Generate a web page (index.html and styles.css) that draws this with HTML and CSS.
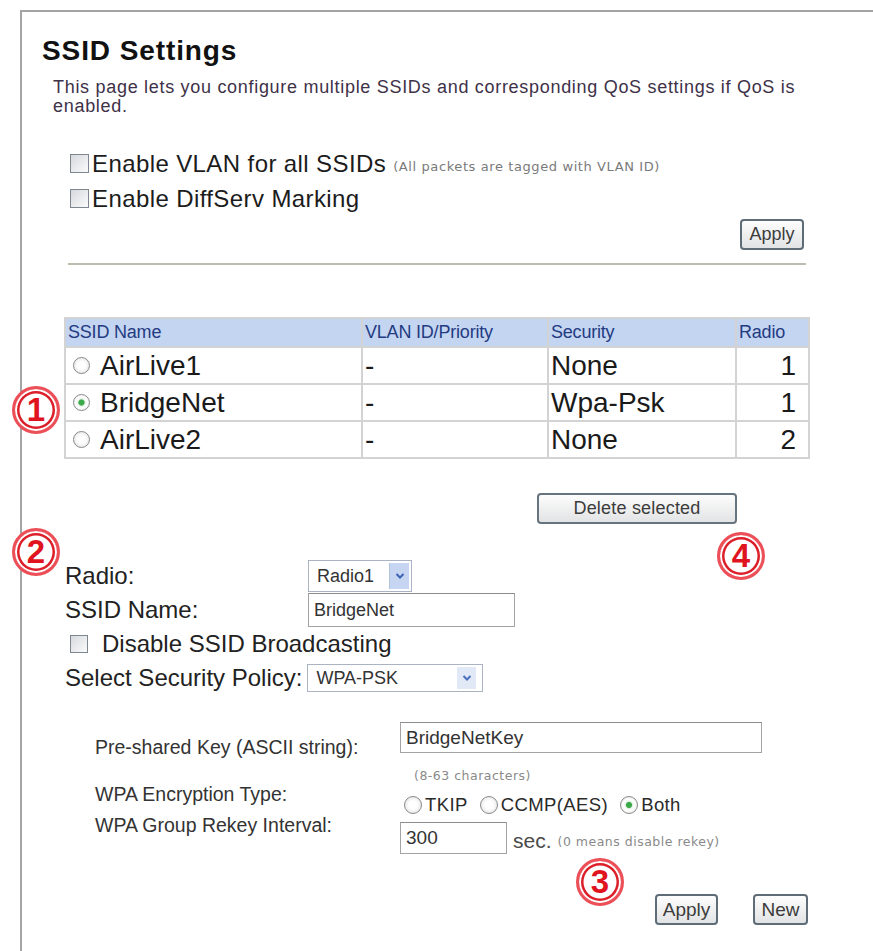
FILE: index.html
```html
<!DOCTYPE html>
<html>
<head>
<meta charset="utf-8">
<title>SSID Settings</title>
<link rel="stylesheet" href="styles.css">
</head>
<body>
<div class="page">
  <div class="frame">
    <h1 class="title">SSID Settings</h1>
    <p class="desc">This page lets you configure multiple SSIDs and corresponding QoS settings if QoS is enabled.</p>

    <div class="opts">
      <div class="opt"><span class="cb"></span><span>Enable VLAN for all SSIDs</span><span class="note">(All packets are tagged with VLAN ID)</span></div>
      <div class="opt"><span class="cb"></span><span>Enable DiffServ Marking</span></div>
    </div>

    <div class="apply-row"><button class="btn apply">Apply</button></div>
    <div class="rule"></div>

    <table class="ssids">
      <colgroup><col class="w1"><col class="w2"><col class="w3"><col class="w4"></colgroup>
      <thead>
        <tr><th>SSID Name</th><th>VLAN ID/Priority</th><th>Security</th><th>Radio</th></tr>
      </thead>
      <tbody>
        <tr><td><span class="rd"></span>AirLive1</td><td>-</td><td>None</td><td class="num">1</td></tr>
        <tr><td class="mark"><span class="badge b1">1</span><span class="rd on"></span>BridgeNet</td><td>-</td><td>Wpa-Psk</td><td class="num">1</td></tr>
        <tr><td><span class="rd"></span>AirLive2</td><td>-</td><td>None</td><td class="num">2</td></tr>
      </tbody>
    </table>

    <div class="del-row">
      <button class="btn del">Delete selected</button>
      <span class="badge b4">4</span>
    </div>

    <div class="edit">
      <span class="badge b2">2</span>
      <div class="erow"><span class="elabel">Radio:</span><span class="sel s-radio"><span class="sv">Radio1</span><span class="arr"><svg width="10" height="8" viewBox="0 0 10 8"><path d="M1.5 2 L5 5.5 L8.5 2" fill="none" stroke="#3d63b5" stroke-width="2"/></svg></span></span></div>
      <div class="erow"><span class="elabel">SSID Name:</span><span class="inp i-ssid">BridgeNet</span></div>
      <div class="erow chk"><span class="cb"></span><span>Disable SSID Broadcasting</span></div>
      <div class="erow"><span class="plabel">Select Security Policy:</span><span class="sel s-pol"><span class="sv">WPA-PSK</span><span class="arr light"><svg width="10" height="8" viewBox="0 0 10 8"><path d="M1.5 2 L5 5.5 L8.5 2" fill="none" stroke="#4a6fbd" stroke-width="2"/></svg></span></span></div>
    </div>

    <div class="wpa">
      <div class="wcol-l">
        <span class="wl l-key">Pre-shared Key (ASCII string):</span>
        <span class="wl l-enc">WPA Encryption Type:</span>
        <span class="wl l-rk">WPA Group Rekey Interval:</span>
      </div>
      <div class="wcol-r">
        <span class="inp i-key">BridgeNetKey</span>
        <span class="hint h-chars">(8-63 characters)</span>
        <span class="radios">
          <span class="ropt"><span class="rd big"></span>TKIP</span>
          <span class="ropt"><span class="rd big"></span>CCMP(AES)</span>
          <span class="ropt"><span class="rd big on"></span>Both</span>
        </span>
        <span class="rekey"><span class="inp i-rk">300</span><span class="sec">sec.</span><span class="hint h-rk">(0 means disable rekey)</span></span>
      </div>
    </div>

    <div class="btns">
      <span class="badge b3">3</span>
      <button class="btn apply2">Apply</button>
      <button class="btn new">New</button>
    </div>
  </div>
</div>
</body>
</html>
```

FILE: styles.css
```css
html, body {
  margin: 0;
  padding: 0;
  background: #ffffff;
}
body {
  font-family: "Liberation Sans", Arial, sans-serif;
  color: #1e1e1e;
}
.page {
  position: relative;
  width: 873px;
  height: 951px;
  overflow: hidden;
}
.frame {
  margin: 10px 0 0 20px;
  height: 941px;
  box-sizing: border-box;
  border-top: 2px solid #a4a4a4;
  border-left: 2px solid #a4a4a4;
}

/* heading */
.title {
  margin: 23px 0 0 20px;
  font-size: 28px;
  line-height: 32px;
  font-weight: bold;
  letter-spacing: 0.9px;
  color: #111;
}
.desc {
  margin: 11px 0 0 31px;
  width: 760px;
  font-size: 18px;
  line-height: 19px;
  letter-spacing: 0.7px;
  color: #3e3148;
}

/* options */
.opts {
  margin: 30px 0 0 48px;
}
.opt {
  display: flex;
  align-items: center;
  height: 35px;
  font-size: 24px;
  letter-spacing: 0.4px;
  color: #1c1c1c;
}
.cb {
  flex: none;
  display: inline-block;
  width: 19px;
  height: 19px;
  box-sizing: border-box;
  border: 1px solid #7d878d;
  background: linear-gradient(135deg, #d6d9de, #fbfbfb);
  margin-right: 3px;
}
.note {
  font-family: "DejaVu Sans", Verdana, sans-serif;
  font-size: 13px;
  letter-spacing: 0.6px;
  color: #7a7a7a;
  margin-left: 7px;
  padding-top: 5px;
}

/* buttons */
.btn {
  font-family: "Liberation Sans", Arial, sans-serif;
  font-size: 18px;
  color: #3c3c3c;
  background: linear-gradient(#fdfdfd, #e2e3e4);
  border: 2px solid #5e6c78;
  border-radius: 4px;
  height: 31px;
  padding: 0;
  box-sizing: border-box;
}
.apply-row {
  margin: 3px 0 0 46px;
  width: 736px;
  display: flex;
  justify-content: flex-end;
}
.apply { width: 64px; }
.rule {
  margin: 13px 0 0 46px;
  width: 738px;
  height: 2px;
  background: #bdbcae;
}

/* table */
.ssids {
  margin: 52px 0 0 42px;
  width: 744px;
  border-collapse: collapse;
  table-layout: fixed;
  border: 2px solid #d0d0d0;
}
.w1 { width: 297px; }
.w2 { width: 186px; }
.w3 { width: 188px; }
.w4 { width: 73px; }
.ssids th {
  height: 27px;
  padding: 0 2px;
  background: #c4d5f1;
  border: 2px solid #d3d3d3;
  font-size: 18px;
  font-weight: normal;
  letter-spacing: -0.2px;
  text-align: left;
  color: #233b82;
}
.ssids td {
  height: 35px;
  padding: 0 2px;
  border: 2px solid #d3d3d3;
  font-size: 28px;
  line-height: 32px;
  color: #1a1a1a;
  white-space: nowrap;
}
.ssids td.num {
  text-align: right;
  padding-right: 12px;
}
.ssids td.mark {
  position: relative;
}
.rd {
  display: inline-block;
  width: 17px;
  height: 17px;
  box-sizing: border-box;
  border-radius: 50%;
  border: 1px solid #8a8a8a;
  background: radial-gradient(circle, #ffffff 35%, #dcdcdc 100%);
  margin: 0 10px 0 5px;
  vertical-align: 1px;
}
.rd.on {
  background: radial-gradient(circle, #3ba84a 0, #3ba84a 2.6px, #e6f3e8 3.6px, #ffffff 5.5px, #dcdcdc 100%);
}

/* delete */
.del-row {
  position: relative;
  margin: 34px 0 0 515px;
  height: 31px;
}
.del {
  width: 200px;
  height: 31px;
  font-size: 18px;
  letter-spacing: 0.2px;
  border-color: #66747f;
}

/* edit form */
.edit {
  position: relative;
  margin: 35px 0 0 43px;
}
.erow {
  display: flex;
  align-items: center;
  height: 34px;
  font-size: 24px;
  color: #222;
}
.elabel {
  width: 243px;
  flex: none;
}
.erow.chk .cb {
  width: 18px;
  height: 18px;
  margin: 0 14px 0 5px;
}
.plabel {
  margin-right: 5px;
}
.sel {
  display: inline-flex;
  align-items: center;
  justify-content: space-between;
  box-sizing: border-box;
  border: 1px solid #a9b3c1;
  font-size: 18px;
  color: #333;
  background: #fff;
}
.sv { padding-left: 8px; }
.s-radio { width: 104px; height: 32px; }
.s-pol { width: 176px; height: 28px; }
.arr {
  display: flex;
  align-items: center;
  justify-content: center;
  width: 19px;
  height: 26px;
  margin-right: 2px;
  background: #c6d6f2;
  border-left: 1px solid #b3c3de;
}
.arr.light {
  height: 22px;
  background: #e1e9f7;
  border-left-color: #fff;
  margin-right: 6px;
}
.inp {
  display: inline-flex;
  align-items: center;
  box-sizing: border-box;
  border: 1px solid #a3a3a3;
  border-top-color: #8c8c8c;
  background: #fff;
  padding-left: 5px;
  font-size: 18px;
  color: #333;
}
.i-ssid {
  width: 207px;
  height: 34px;
}

/* WPA section */
.wpa {
  margin: 27px 0 0 73px;
  display: flex;
}
.wcol-l {
  width: 305px;
  flex: none;
  display: flex;
  flex-direction: column;
}
.wcol-r {
  display: flex;
  flex-direction: column;
  align-items: flex-start;
}
.wl {
  font-size: 19.5px;
  line-height: 22px;
  color: #333;
}
.l-key { margin-top: 14px; }
.l-enc { margin-top: 25px; }
.l-rk { margin-top: 9px; }
.i-key {
  width: 362px;
  height: 31px;
  font-size: 19px;
}
.hint {
  font-family: "DejaVu Sans", Verdana, sans-serif;
  font-size: 12.5px;
  letter-spacing: 0.5px;
  color: #8a8a8a;
}
.h-chars {
  margin: 13px 0 0 14px;
  line-height: 20px;
}
.radios {
  display: flex;
  align-items: center;
  height: 20px;
  margin-top: 9px;
  margin-left: 4px;
  font-size: 18.5px;
  letter-spacing: 0.4px;
  color: #2a2a2a;
}
.ropt {
  display: inline-flex;
  align-items: center;
  margin-right: 12px;
}
.rd.big {
  width: 18px;
  height: 18px;
  margin: 0 3px 0 0;
  vertical-align: middle;
}
.rekey {
  display: flex;
  align-items: flex-end;
  margin-top: 7px;
}
.i-rk {
  width: 107px;
  height: 32px;
  font-size: 19px;
}
.sec {
  font-size: 21px;
  line-height: 22px;
  color: #4a4a4a;
  margin: 0 6px 2px 6px;
}
.h-rk {
  margin-bottom: 5px;
}

/* bottom buttons */
.btns {
  position: relative;
  margin: 40px 0 0 633px;
  display: flex;
  gap: 35px;
  height: 31px;
}
.apply2 { width: 63px; height: 31px; font-size: 19px; }
.new { width: 55px; height: 31px; font-size: 19px; }

/* annotation badges */
.badge {
  position: absolute;
  width: 48px;
  height: 48px;
  box-sizing: border-box;
  border-radius: 50%;
  border: 3px solid #ec4f57;
  box-shadow: inset 0 0 0 2px #ffffff, inset 0 0 0 4.5px #dc1f29;
  background: #fff;
  color: #e0141e;
  font-family: "Liberation Sans", Arial, sans-serif;
  font-weight: bold;
  font-size: 33px;
  line-height: 42px;
  text-align: center;
  letter-spacing: 0;
  white-space: nowrap;
}
.b1 { left: -54px; top: 1px; }
.b2 { left: -53px; top: -31px; }
.b3 { left: -79px; top: -36px; }
.b4 { left: 180px; top: 39px; }
```
